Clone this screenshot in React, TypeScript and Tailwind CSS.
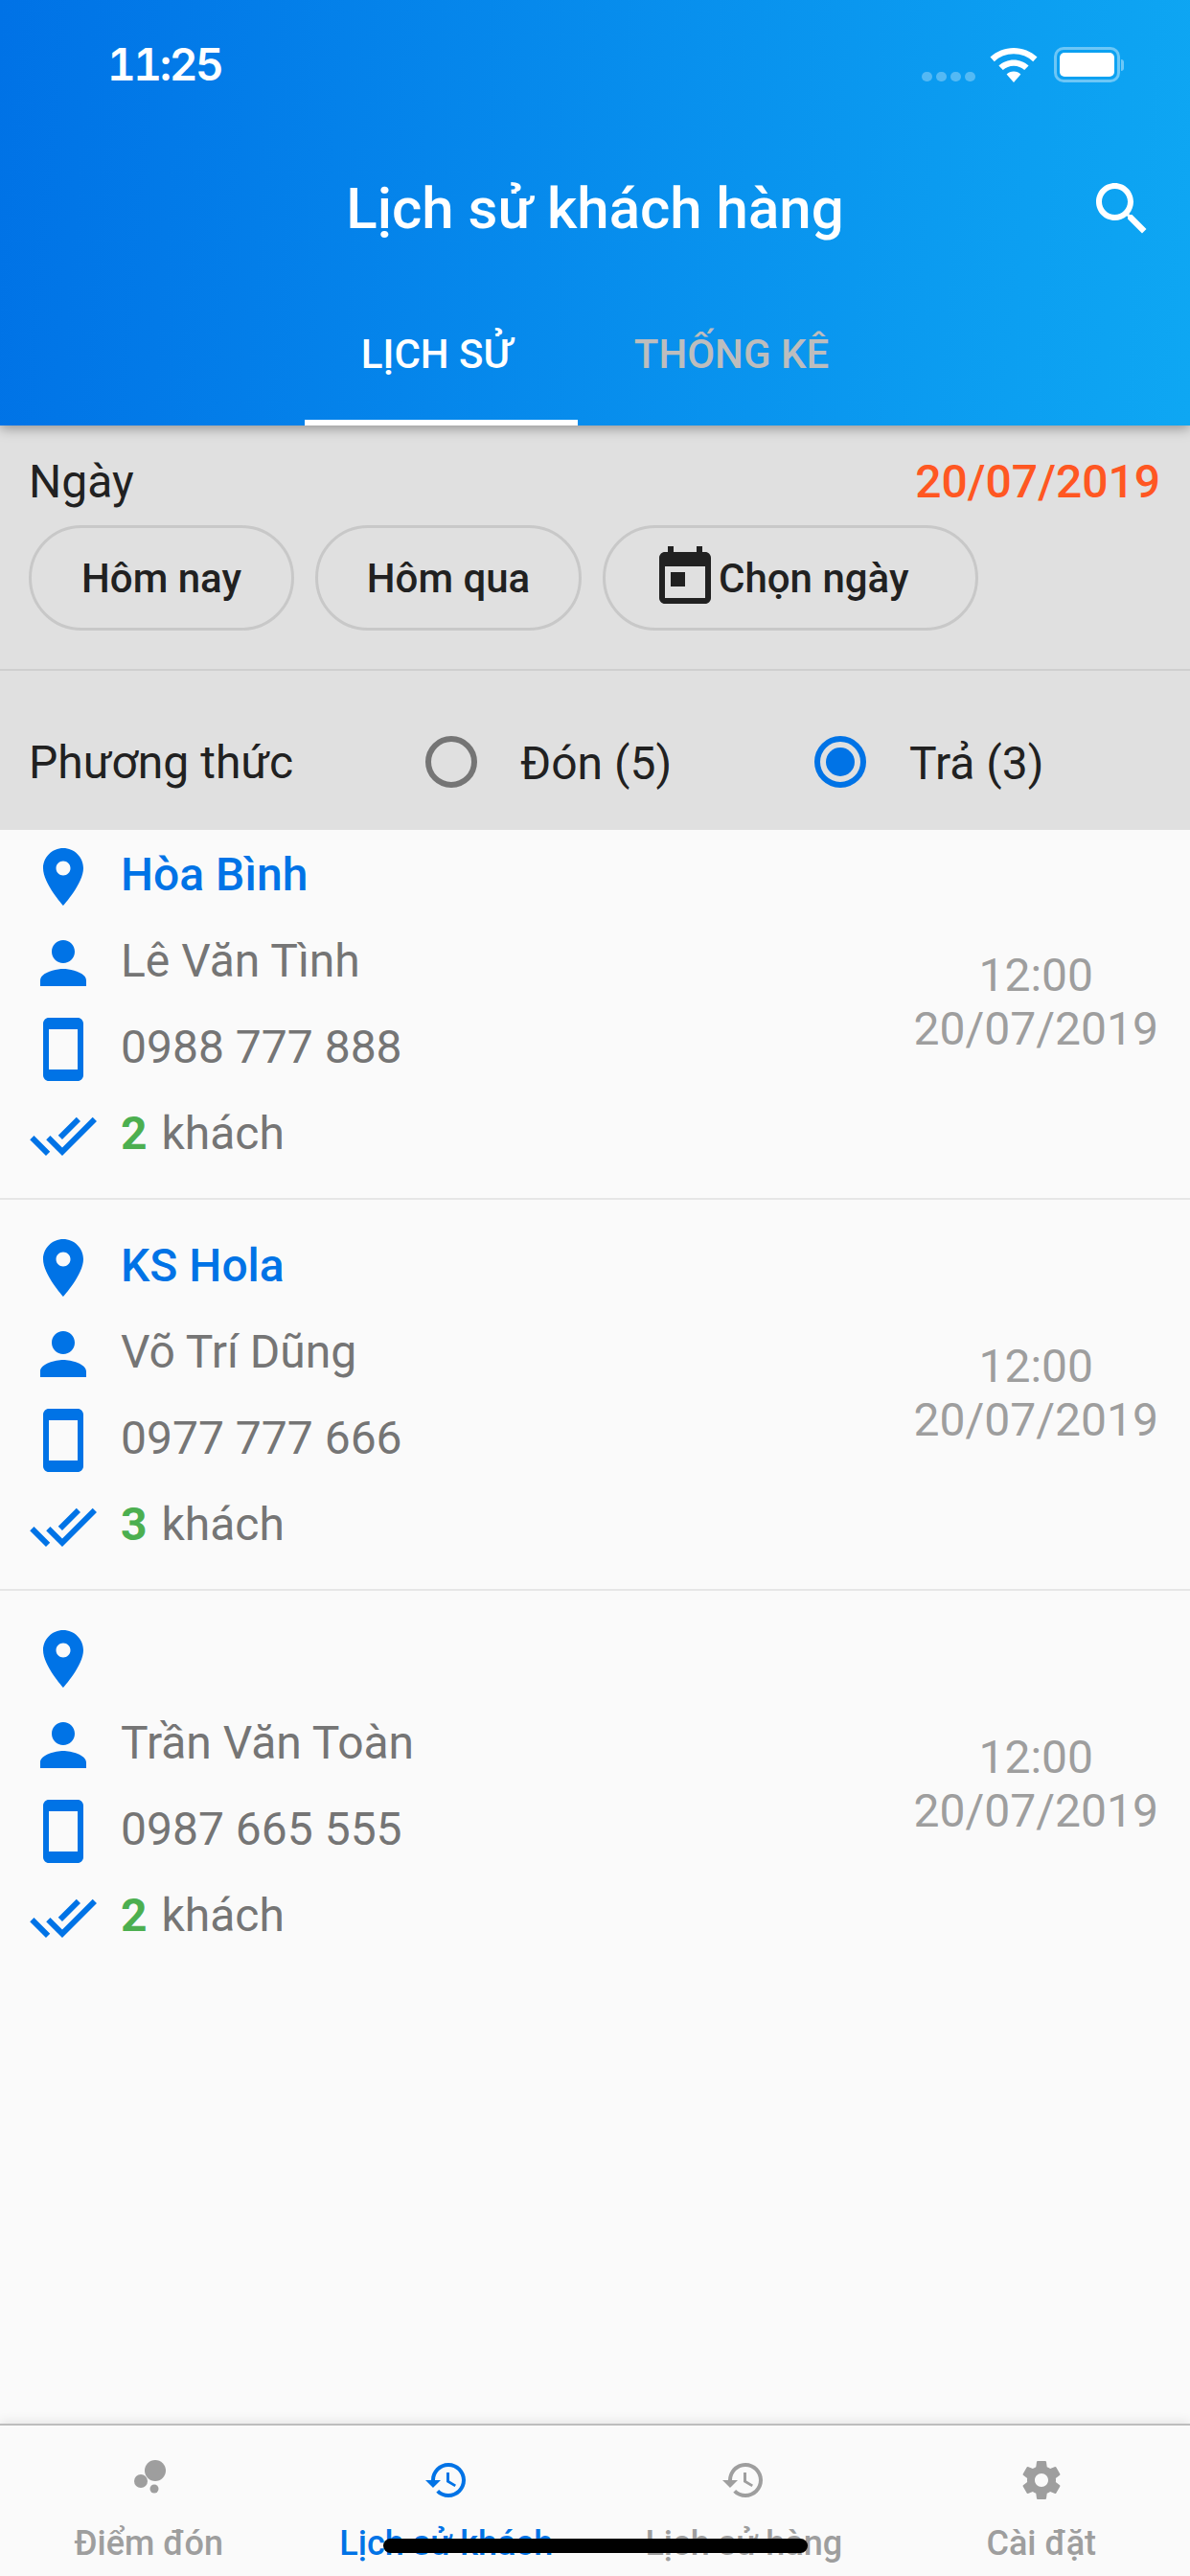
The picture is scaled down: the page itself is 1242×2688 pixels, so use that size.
const P = {
  search: "M15.5 14h-.79l-.28-.27C15.41 12.59 16 11.11 16 9.5 16 5.91 13.09 3 9.5 3S3 5.91 3 9.5 5.91 16 9.5 16c1.61 0 3.09-.59 4.23-1.57l.27.28v.79l5 4.99L20.49 19l-4.99-5zm-6 0C7.01 14 5 11.99 5 9.5S7.01 5 9.5 5 14 7.01 14 9.5 11.99 14 9.5 14z",
  today: "M19 3h-1V1h-2v2H8V1H6v2H5c-1.11 0-1.99.9-1.99 2L3 19c0 1.1.89 2 2 2h14c1.1 0 2-.9 2-2V5c0-1.1-.9-2-2-2zm0 16H5V8h14v11zM7 10h5v5H7z",
  place: "M12 2C8.13 2 5 5.13 5 9c0 5.25 7 13 7 13s7-7.75 7-13c0-3.87-3.13-7-7-7zm0 9.5c-1.38 0-2.5-1.12-2.5-2.5s1.12-2.5 2.5-2.5 2.5 1.12 2.5 2.5-1.12 2.5-2.5 2.5z",
  person: "M12 12c2.21 0 4-1.79 4-4s-1.79-4-4-4-4 1.79-4 4 1.79 4 4 4zm0 2c-2.67 0-8 1.34-8 4v2h16v-2c0-2.66-5.33-4-8-4z",
  phone: "M17 1.01L7 1c-1.1 0-1.99.9-1.99 2v18c0 1.1.89 2 1.99 2h10c1.1 0 2-.9 2-2V3c0-1.1-.9-1.99-2-1.99zM17 19H7V5h10v14z",
  doneAll: "M18 7l-1.41-1.41-6.34 6.34 1.41 1.41L18 7zm4.24-1.41L11.66 16.17 7.48 12l-1.41 1.41L11.66 19l12-12-1.42-1.41zM.41 13.41L6 19l1.41-1.41L1.83 12 .41 13.41z",
  history: "M13 3c-4.97 0-9 4.03-9 9H1l3.89 3.89.07.14L9 12H6c0-3.87 3.13-7 7-7s7 3.13 7 7-3.13 7-7 7c-1.93 0-3.68-.79-4.94-2.06l-1.42 1.42C8.27 19.99 10.51 21 13 21c4.97 0 9-4.03 9-9s-4.03-9-9-9zm-1 5v5l4.28 2.54.72-1.21-3.5-2.08V8H12z",
  settings: "M19.43 12.98c.04-.32.07-.64.07-.98s-.03-.66-.07-.98l2.11-1.65c.19-.15.24-.42.12-.64l-2-3.46c-.12-.22-.39-.3-.61-.22l-2.49 1c-.52-.4-1.08-.73-1.69-.98l-.38-2.65C14.46 2.18 14.25 2 14 2h-4c-.25 0-.46.18-.49.42l-.38 2.65c-.61.25-1.17.59-1.69.98l-2.49-1c-.23-.09-.49 0-.61.22l-2 3.46c-.13.22-.07.49.12.64l2.11 1.65c-.04.32-.07.65-.07.98s.03.66.07.98l-2.11 1.65c-.19.15-.24.42-.12.64l2 3.46c.12.22.39.3.61.22l2.49-1c.52.4 1.08.73 1.69.98l.38 2.65c.03.24.24.42.49.42h4c.25 0 .46-.18.49-.42l.38-2.65c.61-.25 1.17-.59 1.69-.98l2.49 1c.23.09.49 0 .61-.22l2-3.46c.12-.22.07-.49-.12-.64l-2.11-1.65zM12 15.5c-1.93 0-3.5-1.57-3.5-3.5s1.57-3.5 3.5-3.5 3.5 1.57 3.5 3.5-1.57 3.5-3.5 3.5z",
};

function Icon({ d, className }: { d: string; className: string }) {
  return (
    <svg viewBox="0 0 24 24" className={className} fill="currentColor">
      <path d={d} />
    </svg>
  );
}

function StatusBar() {
  return (
    <div className="h-[132px] flex items-start pt-[44px] pl-[112px] pr-[69px] justify-between">
      <span className="text-[46px] leading-[46px] font-semibold text-white font-['Inter',sans-serif] tabular-nums tracking-[-2.4px]">11:25</span>
      <div className="flex items-end h-[38px] mt-[4px]">
        <div className="flex gap-[4px] items-end pb-[1px]">
          <span className="w-[11px] h-[10px] rounded-full bg-white/30" />
          <span className="w-[11px] h-[10px] rounded-full bg-white/30" />
          <span className="w-[11px] h-[10px] rounded-full bg-white/30" />
          <span className="w-[11px] h-[10px] rounded-full bg-white/30" />
        </div>
        <svg viewBox="0 0 50 36" className="w-[50px] h-[36px] ml-[15px]" fill="white">
          <path d="M25 0C15.6 0 7 3.6.5 9.6l4.3 4.6C10 9.3 17.2 6.3 25 6.3s15 3 20.2 7.9l4.3-4.6C43 3.6 34.4 0 25 0z" />
          <path d="M25 12.4c-6 0-11.5 2.3-15.6 6.1l4.4 4.6c3-2.7 6.9-4.4 11.2-4.4s8.2 1.7 11.2 4.4l4.4-4.6C36.5 14.7 31 12.4 25 12.4z" />
          <path d="M25 24.6c-2.9 0-5.5 1.1-7.4 2.9L25 36l7.4-8.5c-1.9-1.8-4.5-2.9-7.4-2.9z" />
        </svg>
        <div className="flex items-center ml-[17px]">
          <div className="w-[69px] h-[37px] rounded-[10px] border-[3px] border-white/40 p-[3px]">
            <div className="w-full h-full rounded-[5px] bg-white" />
          </div>
          <div className="w-[3px] h-[12px] rounded-r-full bg-white/40 ml-[1px]" />
        </div>
      </div>
    </div>
  );
}

function Header() {
  return (
    <header className="relative z-10 h-[444px] shrink-0 bg-[linear-gradient(95deg,#0072E6,#0EA7F3)] shadow-[0_3px_12px_rgba(0,0,0,0.35)]">
      <StatusBar />
      <div className="h-[172px] grid grid-cols-[1fr_auto_1fr] items-center">
        <span />
        <h1 className="text-[60px] leading-[72px] font-medium text-white">Lịch sử khách hàng</h1>
        <div className="flex justify-end pr-[35px]">
          <Icon d={P.search} className="w-[72px] h-[72px] text-white" />
        </div>
      </div>
      <div className="h-[140px] flex justify-center pr-[3px]">
        <div className="w-[285px] flex items-center justify-center border-b-[6px] border-white pb-[4px] pr-[10px] text-[42px] font-medium text-white">LỊCH SỬ</div>
        <div className="w-[318px] flex items-center justify-center border-b-[6px] border-transparent pb-[4px] pl-[3px] text-[42px] font-medium text-[#BDBDBD]">THỐNG KÊ</div>
      </div>
    </header>
  );
}

function Chip({ children, className }: { children: React.ReactNode; className: string }) {
  return (
    <div className={`h-[110px] rounded-[55px] border-[3px] border-[#C8C8C8] flex items-center text-[42px] font-medium text-[#212121] ${className}`}>
      {children}
    </div>
  );
}

function Radio({ checked, label, className }: { checked: boolean; label: string; className: string }) {
  return (
    <div className={`flex items-center gap-[39px] ${className}`}>
      <div className={`w-[54px] h-[54px] mx-[6px] rounded-full border-[6px] flex items-center justify-center ${checked ? "border-[#0073E6]" : "border-[#757575]"}`}>
        {checked && <span className="w-[30px] h-[30px] rounded-full bg-[#0073E6]" />}
      </div>
      <span className="text-[48px] mt-[3px] text-[#212121]">{label}</span>
    </div>
  );
}

function Filters() {
  return (
    <section className="shrink-0 bg-[#E0E0E0] h-[422px] text-[#212121]">
      <div className="h-[254px] px-[30px] pt-[28px]">
        <div className="h-[60px] flex items-center justify-between">
          <span className="text-[48px] mt-[2px]">Ngày</span>
          <span className="text-[48px] mt-[2px] font-medium text-[#FF5722] pr-[1px]">20/07/2019</span>
        </div>
        <div className="flex gap-[22px] mt-[16px]">
          <Chip className="w-[277px] justify-center">Hôm nay</Chip>
          <Chip className="w-[278px] justify-center">Hôm qua</Chip>
          <Chip className="w-[392px] pl-[47px]">
            <Icon d={P.today} className="w-[72px] h-[72px] text-[#212121] shrink-0" />
            <span className="-ml-[1px]">Chọn ngày</span>
          </Chip>
        </div>
      </div>
      <div className="h-[2px] bg-[#CFCFCF]" />
      <div className="h-[166px] pt-[24px] pl-[30px] flex items-center">
        <span className="w-[408px] mt-[2px] text-[48px]">Phương thức</span>
        <Radio checked={false} label="Đón (5)" className="w-[406px]" />
        <Radio checked={true} label="Trả (3)" className="" />
      </div>
    </section>
  );
}

function Line({ d, children }: { d: string; children?: React.ReactNode }) {
  return (
    <div className="h-[90px] flex items-center gap-[24px]">
      <Icon d={d} className="w-[72px] h-[72px] mt-[7px] shrink-0 text-[#0073E6]" />
      <div className="text-[48px] mt-[3px] text-[#757575] whitespace-nowrap">{children}</div>
    </div>
  );
}

function Row({ place, name, phone, guests, first, last }: { place: string; name: string; phone: string; guests: number; first?: boolean; last?: boolean }) {
  return (
    <div className={`pb-[24px] pl-[30px] pr-[33px] ${first ? "" : "pt-[22px]"} ${last ? "" : "border-b-2 border-[#E6E6E6]"}`}>
      <div className="flex justify-between">
        <div>
          <Line d={P.place}>
            <span className="font-medium text-[#0073E6]">{place}</span>
          </Line>
          <Line d={P.person}>{name}</Line>
          <Line d={P.phone}>{phone}</Line>
          <Line d={P.doneAll}>
            <span className="font-bold text-[#4CAF50]">{guests}</span>
            <span className="ml-[3px]"> khách</span>
          </Line>
        </div>
        <div className="flex flex-col items-center justify-center text-[48px] leading-[56px] text-[#9E9E9E]">
          <span>12:00</span>
          <span>20/07/2019</span>
        </div>
      </div>
    </div>
  );
}

function Tab({ label, active, children }: { label: string; active?: boolean; children: React.ReactNode }) {
  const color = active ? "text-[#0073E6]" : "text-[#9E9E9E]";
  return (
    <div className="flex-1 flex flex-col items-center">
      <div className={`h-[48px] mt-[33px] flex items-center ${color}`}>{children}</div>
      <span className={`mt-[20px] text-[36px] leading-[44px] font-medium whitespace-nowrap ${color}`}>{label}</span>
    </div>
  );
}

export default function App() {
  return (
    <div className="relative w-[1242px] h-[2688px] flex flex-col bg-[#FAFAFA] font-['Roboto',sans-serif] overflow-hidden">
      <Header />
      <Filters />
      <main className="flex-1">
        <Row first place="Hòa Bình" name="Lê Văn Tình" phone="0988 777 888" guests={2} />
        <Row place="KS Hola" name="Võ Trí Dũng" phone="0977 777 666" guests={3} />
        <Row last place="" name="Trần Văn Toàn" phone="0987 665 555" guests={2} />
      </main>
      <nav className="h-[159px] shrink-0 flex bg-[#FAFAFA] border-t-2 border-[#BDBDBD] shadow-[0_-3px_10px_rgba(0,0,0,0.08)]">
        <Tab label="Điểm đón">
          <svg viewBox="0 0 48 48" className="w-[48px] h-[48px]" fill="currentColor">
            <circle cx="31" cy="14" r="11" />
            <circle cx="16" cy="25" r="7" />
            <circle cx="30" cy="33" r="4.5" />
          </svg>
        </Tab>
        <Tab label="Lịch sử khách" active>
          <Icon d={P.history} className="w-[48px] h-[48px]" />
        </Tab>
        <Tab label="Lịch sử hàng">
          <Icon d={P.history} className="w-[48px] h-[48px]" />
        </Tab>
        <Tab label="Cài đặt">
          <Icon d={P.settings} className="w-[48px] h-[48px]" />
        </Tab>
      </nav>
      <div className="absolute left-[400px] top-[2649px] w-[443px] h-[15px] rounded-full bg-black" />
    </div>
  );
}
